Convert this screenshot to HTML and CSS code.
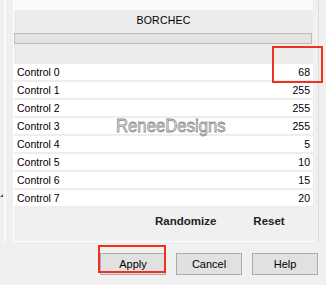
FILE: index.html
```html
<!DOCTYPE html>
<html>
<head>
  <meta charset="UTF-8"/>
  <title>BORCHEC</title>
  <link rel="stylesheet" href="styles.css">
</head>
<body>
  <div class="top">
    <div class="rail-left"><span class="arrow"></span></div>
    <div class="panel">
      <div class="panel-top"></div>
      <div class="header">
        <div class="title">BORCHEC</div>
        <div class="bar"></div>
      </div>
      <div class="rows">
        <div class="row"><span>Control 0</span><span>68</span></div>
        <div class="row"><span>Control 1</span><span>255</span></div>
        <div class="row"><span>Control 2</span><span>255</span></div>
        <div class="row"><span>Control 3</span><span>255</span></div>
        <div class="row"><span>Control 4</span><span>5</span></div>
        <div class="row"><span>Control 5</span><span>10</span></div>
        <div class="row"><span>Control 6</span><span>15</span></div>
        <div class="row"><span>Control 7</span><span>20</span></div>
      </div>
      <div class="actions">
        <span class="randomize">Randomize</span>
        <span class="reset">Reset</span>
      </div>
    </div>
    <div class="rail-right"></div>
  </div>

  <div class="bottom">
    <button class="btn">Apply</button>
    <button class="btn">Cancel</button>
    <button class="btn">Help</button>
  </div>

  <div class="watermark">ReneeDesigns</div>
  <div class="mark mark-value"></div>
  <div class="mark mark-apply"></div>
</body>
</html>
```

FILE: styles.css
```css
body {
  margin: 0;
  width: 326px;
  height: 285px;
  background: #f0f0f0;
  font-family: "Liberation Sans", Arial, sans-serif;
  font-size: 10.5px;
  color: #000;
  position: relative;
  overflow: hidden;
}
.top {
  display: flex;
  height: 242px;
}
.rail-left {
  width: 13px;
  border-right: 1px solid #fff;
  background: linear-gradient(to right, #f0f0f0 4px, #fbfbfb 4px, #fbfbfb 6px, #f0f0f0 6px);
  position: relative;
}
.arrow {
  position: absolute;
  left: 0;
  top: 194px;
  width: 0;
  height: 0;
  border-left: 3px solid transparent;
  border-bottom: 3px solid #555;
}
.panel {
  width: 299px;
  display: flex;
  flex-direction: column;
  border-bottom: 1px solid #fff;
}
.panel-top {
  height: 10px;
  background: #fafafa;
}
.header {
  height: 50px;
  background: #ececec;
  padding-top: 4px;
}
.title {
  text-align: center;
  line-height: 13px;
  letter-spacing: 0.2px;
}
.bar {
  margin: 6px 1px 0 0;
  height: 9px;
  border: 1px solid #bcbcbc;
  background: #e3e3e3;
}
.rows {
  background: #eeeeee;
}
.row {
  height: 16px;
  margin-bottom: 2px;
  background: #fff;
  display: flex;
  justify-content: space-between;
  align-items: center;
  padding: 0 3px 0 3px;
}
.actions {
  flex: 1;
  display: flex;
  align-items: flex-start;
  padding-top: 7px;
  font-weight: bold;
  font-size: 11.5px;
  color: #222;
}
.randomize {
  margin-left: 141px;
}
.reset {
  margin-left: 37px;
}
.rail-right {
  width: 12px;
  background: linear-gradient(to right, #f0f0f0 5px, #dcdcdc 5px, #dcdcdc 6px, #f0f0f0 6px);
}
.bottom {
  display: flex;
  justify-content: flex-end;
  gap: 10px;
  padding: 11px 8px 0 0;
}
.btn {
  width: 66px;
  height: 22px;
  background: #e1e1e1;
  border: 1px solid #adadad;
  font-family: "Liberation Sans", Arial, sans-serif;
  font-size: 11px;
  color: #000;
  padding: 0;
}
.watermark {
  position: absolute;
  left: 116px;
  top: 115px;
  font-size: 19px;
  line-height: 22px;
  color: #e6e6e6;
  -webkit-text-stroke: 0.8px #8e8e8e;
  transform: scaleX(0.88);
  transform-origin: left top;
}
.mark {
  position: absolute;
  border: 2px solid #f0321c;
}
.mark-value {
  left: 272px;
  top: 46px;
  width: 47px;
  height: 33px;
}
.mark-apply {
  left: 98px;
  top: 245px;
  width: 64px;
  height: 24px;
}
```
